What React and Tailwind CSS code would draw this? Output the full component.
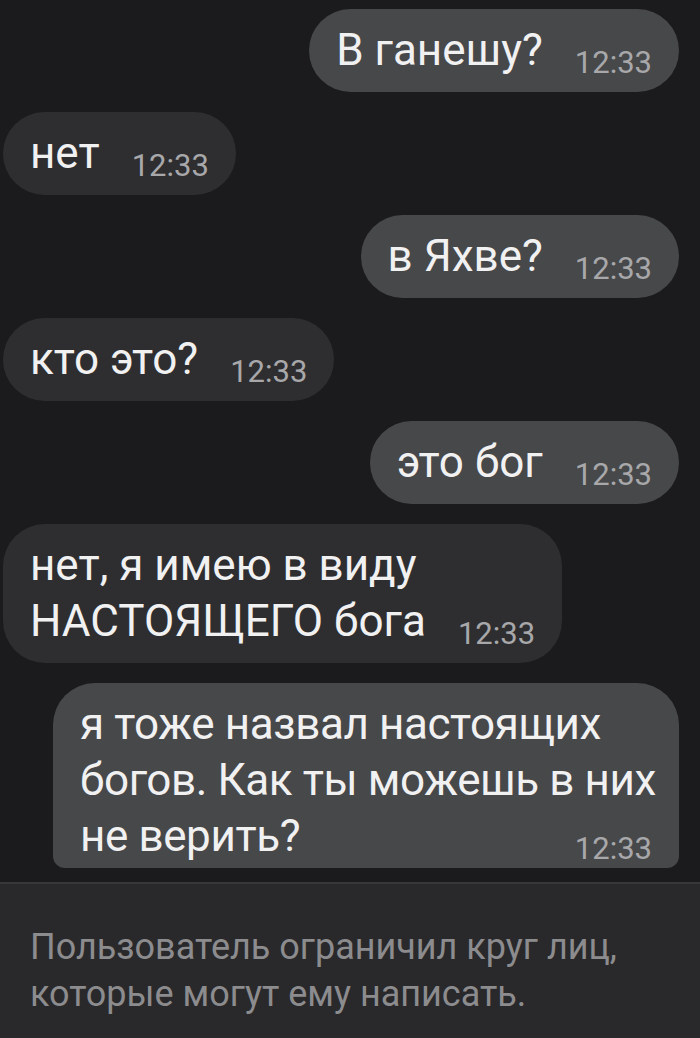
const MESSAGES = [
  { out: true, lines: ['В ганешу?'] },
  { out: false, lines: ['нет'] },
  { out: true, lines: ['в Яхве?'] },
  { out: false, lines: ['кто это?'] },
  { out: true, lines: ['это бог'] },
  { out: false, lines: ['нет, я имею в виду', 'НАСТОЯЩЕГО бога'] },
];

const font = { fontFamily: 'Roboto, "Liberation Sans", sans-serif' };

function Time() {
  return (
    <span className="ml-[32px] shrink-0 text-[31px] leading-[31px] text-[#a8a8ab]">12:33</span>
  );
}

function Bubble({ out, lines }) {
  const head = lines.slice(0, -1);
  const last = lines[lines.length - 1];
  return (
    <div
      className={`flex flex-col rounded-[42px] pl-[27px] pr-[27px] pt-[13px] pb-[14px] text-[44px] leading-[56px] text-[#f1f1f2] whitespace-nowrap
        ${out ? 'self-end mr-[21px] bg-[#47484a]' : 'self-start ml-[3px] bg-[#2e2e30]'}`}
    >
      {head.map((l) => (
        <div key={l}>{l}</div>
      ))}
      <div className="flex items-end">
        <span>{last}</span>
        <Time />
      </div>
    </div>
  );
}

export default function App() {
  return (
    <div className="w-[700px] h-[1038px] bg-[#1b1b1d] flex flex-col overflow-hidden" style={font}>
      {/* Messages */}
      <div className="flex flex-col gap-[20px] pt-[9px]">
        {MESSAGES.map((m, i) => (
          <Bubble key={i} {...m} />
        ))}

        {/* Last message, cut off by the panel */}
        <div className="self-end mr-[21px] w-[626px] flex flex-col rounded-t-[42px] rounded-b-[12px] bg-[#47484a] pl-[27px] pr-[24px] pt-[13px] pb-[4px] text-[44px] leading-[56px] tracking-[-0.4px] text-[#f1f1f2] whitespace-nowrap">
          <div>я тоже назвал настоящих</div>
          <div>богов. Как ты можешь в них</div>
          <div className="flex items-end justify-between">
            <span>не верить?</span>
            <span className="mr-[3px] text-[31px] leading-[31px] tracking-normal text-[#a8a8ab]">12:33</span>
          </div>
        </div>
      </div>

      {/* Restriction panel */}
      <div className="mt-[14px] flex-1 border-t-2 border-[#38383a] bg-[#29292b] px-[30px] pt-[40px]">
        <p className="text-[36px] leading-[47px] text-[#8c8c8f]">
          Пользователь ограничил круг лиц,
          <br />
          которые могут ему написать.
        </p>
      </div>
    </div>
  );
}
